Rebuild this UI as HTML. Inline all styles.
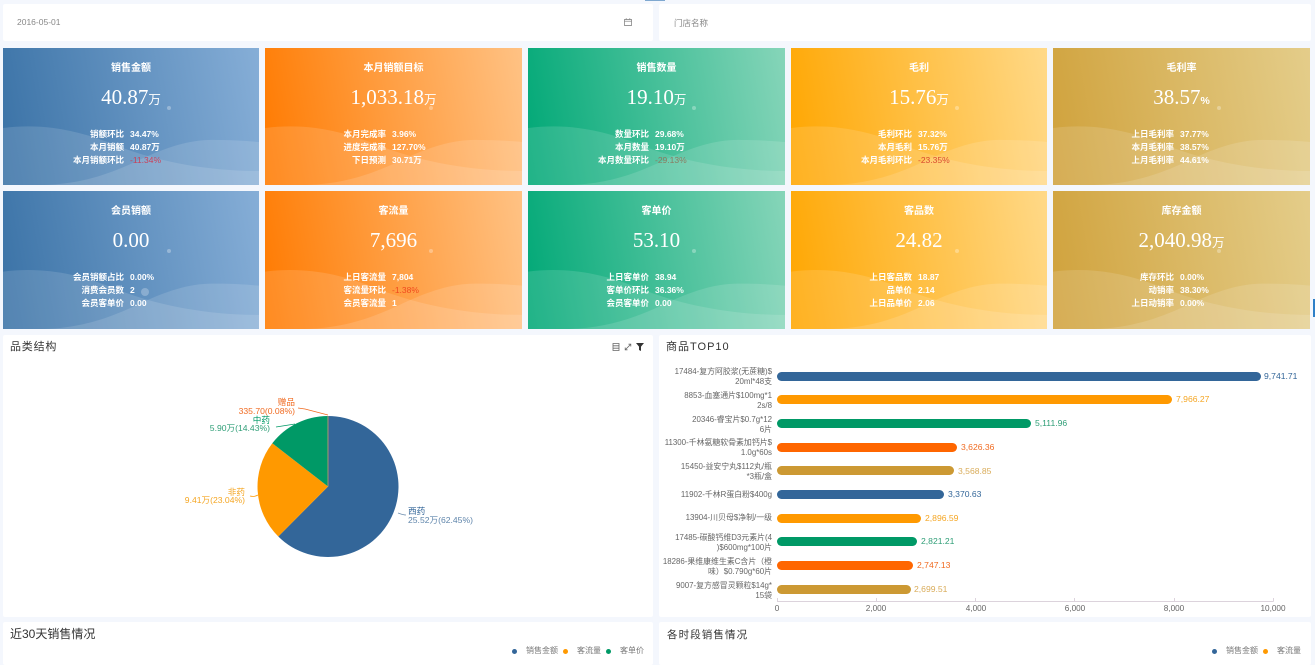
<!DOCTYPE html>
<html lang="zh"><head><meta charset="utf-8"><title>Dashboard</title>
<style>
html,body{margin:0;padding:0}
body{width:1315px;height:665px;position:relative;overflow:hidden;background:#f4f7fd;font-family:"Liberation Sans","Noto Sans CJK SC",sans-serif;color:#333}
.p{position:absolute;background:#fff;border-radius:2px}
.c{position:absolute;overflow:hidden;color:#fff}
.c svg{position:absolute;left:0;top:0;width:100%;height:100%}
.blue{background:linear-gradient(80deg,#3a72a6 0%,#86aed7 100%)}
.orange{background:linear-gradient(80deg,#ff7a00 0%,#ffc284 100%)}
.green{background:linear-gradient(80deg,#00a876 0%,#86d5b9 100%)}
.amber{background:linear-gradient(80deg,#ffa600 0%,#ffd988 100%)}
.gold{background:linear-gradient(80deg,#d0a23c 0%,#e4cd8a 100%)}
.t{position:absolute;left:0;right:0;top:14px;line-height:14px;text-align:center;font-size:10px;font-weight:bold}
.n{position:absolute;left:0;right:0;top:34px;line-height:30px;text-align:center;font-size:21px;font-family:"Liberation Serif","Noto Sans CJK SC",serif}
.n small{font-size:12.5px;font-family:"Liberation Sans","Noto Sans CJK SC",sans-serif}
.n small.pc{font-size:10.5px;font-weight:bold}
.l,.v{position:absolute;font-size:8.5px;line-height:13px;white-space:nowrap;font-weight:bold}
.l{left:0;width:121px;text-align:right}
.v{left:127px}
.a{top:80px}.b{top:93px}.d{top:106px}
.v.red{color:#d9482f;font-weight:normal}
.o{position:absolute;left:164px;top:58px;width:4px;height:4px;border-radius:50%;background:rgba(255,255,255,.3)}
.h{position:absolute;font-size:11px;line-height:14px;color:#333;white-space:nowrap}
.x{position:absolute;font-size:8px;line-height:10px;color:#777;white-space:nowrap}
.e{position:absolute;width:5px;height:5px;border-radius:50%}
.cat{position:absolute;left:640px;width:132px;text-align:right;font-size:7.9px;line-height:9.5px;color:#666;white-space:nowrap}
.bar{position:absolute;left:777px;height:9px;border-radius:4.5px}
.val{position:absolute;font-size:8.6px;line-height:10px;white-space:nowrap}
.tk{position:absolute;top:604px;width:40px;text-align:center;font-size:8.2px;line-height:10px;color:#666}
</style></head><body>
<svg width="0" height="0" style="position:absolute"><defs><symbol id="w" viewBox="0 0 256 137" preserveAspectRatio="none">
<path d="M0 80C40 75 75 82 112 97C150 112 200 123 256 123V137H0Z" fill="#fff" fill-opacity=".13"/>
<path d="M41 137C75 136 102 128 132 114C165 98 190 91 213 92C230 92 245 93 256 94V137Z" fill="#fff" fill-opacity=".13"/>
</symbol></defs></svg>

<div style="position:absolute;left:645px;top:0;width:20px;height:1px;background:#7fa8d0"></div>
<div style="position:absolute;left:1313px;top:299px;width:2px;height:18px;background:#2f80c8"></div>

<div class="p" style="left:3px;top:4px;width:650px;height:37px"></div>
<div class="p" style="left:659px;top:4px;width:652px;height:37px"></div>
<div class="x" style="left:17px;top:17px;color:#888;font-size:8.5px">2016-05-01</div>
<svg style="position:absolute;left:624px;top:18px" width="8" height="8" viewBox="0 0 8 8"><path d="M.5 1.5h7v6h-7zM.5 3.2h7M2.2.3v1.6M5.8.3v1.6" fill="none" stroke="#777" stroke-width=".7"/></svg>
<div class="x" style="left:674px;top:18px;color:#888;font-size:8.5px">门店名称</div>

<!-- row 1 -->
<div class="c blue" style="left:3px;top:48px;width:256px;height:137px"><svg><use href="#w"/></svg><div class="t">销售金额</div><div class="n">40.87<small>万</small></div><div class="o"></div>
<div class="l a">销额环比</div><div class="v a">34.47%</div><div class="l b">本月销额</div><div class="v b">40.87万</div><div class="l d">本月销额环比</div><div class="v d red" style="color:#c9405a">-11.34%</div></div>
<div class="c orange" style="left:265px;top:48px;width:257px;height:137px"><svg><use href="#w"/></svg><div class="t">本月销额目标</div><div class="n">1,033.18<small>万</small></div><div class="o"></div>
<div class="l a">本月完成率</div><div class="v a">3.96%</div><div class="l b">进度完成率</div><div class="v b">127.70%</div><div class="l d">下日预测</div><div class="v d">30.71万</div></div>
<div class="c green" style="left:528px;top:48px;width:257px;height:137px"><svg><use href="#w"/></svg><div class="t">销售数量</div><div class="n">19.10<small>万</small></div><div class="o"></div>
<div class="l a">数量环比</div><div class="v a">29.68%</div><div class="l b">本月数量</div><div class="v b">19.10万</div><div class="l d">本月数量环比</div><div class="v d red" style="color:#8a7a60">-29.13%</div></div>
<div class="c amber" style="left:791px;top:48px;width:256px;height:137px"><svg><use href="#w"/></svg><div class="t">毛利</div><div class="n">15.76<small>万</small></div><div class="o"></div>
<div class="l a">毛利环比</div><div class="v a">37.32%</div><div class="l b">本月毛利</div><div class="v b">15.76万</div><div class="l d">本月毛利环比</div><div class="v d red">-23.35%</div></div>
<div class="c gold" style="left:1053px;top:48px;width:257px;height:137px"><svg><use href="#w"/></svg><div class="t">毛利率</div><div class="n">38.57<small class="pc">%</small></div><div class="o"></div>
<div class="l a">上日毛利率</div><div class="v a">37.77%</div><div class="l b">本月毛利率</div><div class="v b">38.57%</div><div class="l d">上月毛利率</div><div class="v d">44.61%</div></div>

<!-- row 2 -->
<div class="c blue" style="left:3px;top:191px;width:256px;height:138px"><svg><use href="#w"/></svg><div class="t">会员销额</div><div class="n">0.00</div><div class="o"></div>
<div style="position:absolute;left:138px;top:97px;width:8px;height:8px;border-radius:50%;background:rgba(255,255,255,.25)"></div>
<div class="l a">会员销额占比</div><div class="v a">0.00%</div><div class="l b">消费会员数</div><div class="v b">2</div><div class="l d">会员客单价</div><div class="v d">0.00</div></div>
<div class="c orange" style="left:265px;top:191px;width:257px;height:138px"><svg><use href="#w"/></svg><div class="t">客流量</div><div class="n">7,696</div><div class="o"></div>
<div class="l a">上日客流量</div><div class="v a">7,804</div><div class="l b">客流量环比</div><div class="v b red" style="color:#f0491e">-1.38%</div><div class="l d">会员客流量</div><div class="v d">1</div></div>
<div class="c green" style="left:528px;top:191px;width:257px;height:138px"><svg><use href="#w"/></svg><div class="t">客单价</div><div class="n">53.10</div><div class="o"></div>
<div class="l a">上日客单价</div><div class="v a">38.94</div><div class="l b">客单价环比</div><div class="v b">36.36%</div><div class="l d">会员客单价</div><div class="v d">0.00</div></div>
<div class="c amber" style="left:791px;top:191px;width:256px;height:138px"><svg><use href="#w"/></svg><div class="t">客品数</div><div class="n">24.82</div><div class="o"></div>
<div class="l a">上日客品数</div><div class="v a">18.87</div><div class="l b">品单价</div><div class="v b">2.14</div><div class="l d">上日品单价</div><div class="v d">2.06</div></div>
<div class="c gold" style="left:1053px;top:191px;width:257px;height:138px"><svg><use href="#w"/></svg><div class="t">库存金额</div><div class="n">2,040.98<small>万</small></div><div class="o"></div>
<div class="l a">库存环比</div><div class="v a">0.00%</div><div class="l b">动销率</div><div class="v b">38.30%</div><div class="l d">上日动销率</div><div class="v d">0.00%</div></div>

<!-- chart panels -->
<div class="p" style="left:3px;top:335px;width:650px;height:282px"></div>
<div class="p" style="left:659px;top:335px;width:652px;height:282px"></div>
<div class="p" style="left:3px;top:622px;width:650px;height:43px"></div>
<div class="p" style="left:659px;top:622px;width:652px;height:43px"></div>

<div class="h" style="left:10px;top:340px;letter-spacing:.8px">品类结构</div>
<svg style="position:absolute;left:611px;top:342px" width="34" height="10" viewBox="0 0 34 10">
<path d="M2 1.5h6v7h-6zM2 3.8h6M2 6.2h6" fill="none" stroke="#666" stroke-width=".8"/>
<path d="M14.5 7.5l5-5M17.5 2.2h2.3v2.3M14.2 5.5v2.3h2.3" fill="none" stroke="#666" stroke-width=".8"/>
<path d="M25 1h8l-3 3.6V9l-2-1V4.6z" fill="#333"/>
</svg>

<svg style="position:absolute;left:0;top:380px" width="653" height="200" viewBox="0 380 653 200">
<path d="M328 486.5L327.6 416A70.5 70.5 0 1 1 278.3 536.5Z" fill="#336699"/>
<path d="M328 486.5L278.3 536.5A70.5 70.5 0 0 1 272.3 443.3Z" fill="#ff9900"/>
<path d="M328 486.5L272.3 443.3A70.5 70.5 0 0 1 327.6 416Z" fill="#009966"/>
<path d="M328 486.5V416" stroke="#cc9966" stroke-width=".8"/>
<g fill="none" stroke-width=".8">
<path d="M398 513C401 514 403 515 406 515" stroke="#6f8fb0"/>
<path d="M258 495C256 496 254 497 250 496" stroke="#ff9900"/>
<path d="M295 424L276 427" stroke="#009966"/>
<path d="M328 415L305 409L298 408" stroke="#f06a20"/>
</g>
<g font-size="8.6" font-family="Liberation Sans,Noto Sans CJK SC,sans-serif">
<text x="408" y="514" fill="#336699">西药</text>
<text x="408" y="523" fill="#5f85ab">25.52万(62.45%)</text>
<text x="245" y="495" text-anchor="end" fill="#f5a623">非药</text>
<text x="245" y="503" text-anchor="end" fill="#f5a623">9.41万(23.04%)</text>
<text x="270" y="423" text-anchor="end" fill="#009966">中药</text>
<text x="270" y="431" text-anchor="end" fill="#2f9e77">5.90万(14.43%)</text>
<text x="295" y="405" text-anchor="end" fill="#f06a20">赠品</text>
<text x="295" y="414" text-anchor="end" fill="#f06a20">335.70(0.08%)</text>
</g>
</svg>

<div class="h" style="left:666px;top:340px;letter-spacing:1px">商品TOP10</div>

<div class="cat" style="top:367px">17484-复方阿胶浆(无蔗糖)$<br>20ml*48支</div>
<div class="cat" style="top:391px">8853-血塞通片$100mg*1<br>2s/8</div>
<div class="cat" style="top:415px">20346-睿宝片$0.7g*12<br>6片</div>
<div class="cat" style="top:438px">11300-千林氨糖软骨素加钙片$<br>1.0g*60s</div>
<div class="cat" style="top:462px">15450-益安宁丸$112丸/瓶<br>*3瓶/盒</div>
<div class="cat" style="top:490px">11902-千林R蛋白粉$400g</div>
<div class="cat" style="top:513px">13904-川贝母$净制/一级</div>
<div class="cat" style="top:533px">17485-碳酸钙维D3元素片(4<br>)$600mg*100片</div>
<div class="cat" style="top:557px">18286-果维康维生素C含片（橙<br>味）$0.790g*60片</div>
<div class="cat" style="top:581px">9007-复方感冒灵颗粒$14g*<br>15袋</div>

<div class="bar" style="top:372px;width:484px;background:#336699"></div><div class="val" style="left:1264px;top:371px;color:#336699">9,741.71</div>
<div class="bar" style="top:395px;width:395px;background:#ff9900"></div><div class="val" style="left:1176px;top:394px;color:#f5a623">7,966.27</div>
<div class="bar" style="top:419px;width:254px;background:#009966"></div><div class="val" style="left:1035px;top:418px;color:#2f9e77">5,111.96</div>
<div class="bar" style="top:443px;width:180px;background:#ff6600"></div><div class="val" style="left:961px;top:442px;color:#f06a20">3,626.36</div>
<div class="bar" style="top:466px;width:177px;background:#cc9933"></div><div class="val" style="left:958px;top:466px;color:#d9ac5a">3,568.85</div>
<div class="bar" style="top:490px;width:167px;background:#336699"></div><div class="val" style="left:948px;top:489px;color:#336699">3,370.63</div>
<div class="bar" style="top:514px;width:144px;background:#ff9900"></div><div class="val" style="left:925px;top:513px;color:#f5a623">2,896.59</div>
<div class="bar" style="top:537px;width:140px;background:#009966"></div><div class="val" style="left:921px;top:536px;color:#2f9e77">2,821.21</div>
<div class="bar" style="top:561px;width:136px;background:#ff6600"></div><div class="val" style="left:917px;top:560px;color:#f06a20">2,747.13</div>
<div class="bar" style="top:585px;width:134px;background:#cc9933"></div><div class="val" style="left:914px;top:584px;color:#d9ac5a">2,699.51</div>

<svg style="position:absolute;left:770px;top:595px" width="510" height="8" viewBox="770 595 510 8"><path d="M777 601.5H1273.5M777.5 598v3.5M876.5 598v3.5M975.5 598v3.5M1074.5 598v3.5M1174.5 598v3.5M1273.5 598v3.5" fill="none" stroke="#dcd3dc" stroke-width="1"/></svg>
<div class="tk" style="left:757px">0</div>
<div class="tk" style="left:856px">2,000</div>
<div class="tk" style="left:956px">4,000</div>
<div class="tk" style="left:1055px">6,000</div>
<div class="tk" style="left:1154px">8,000</div>
<div class="tk" style="left:1253px">10,000</div>

<div class="h" style="left:10px;top:627px;font-size:12px">近30天销售情况</div>
<div class="e" style="left:512px;top:649px;background:#336699"></div><div class="x" style="left:526px;top:646px">销售金额</div>
<div class="e" style="left:563px;top:649px;background:#ff9900"></div><div class="x" style="left:577px;top:646px">客流量</div>
<div class="e" style="left:606px;top:649px;background:#009966"></div><div class="x" style="left:620px;top:646px">客单价</div>

<div class="h" style="left:667px;top:628px;font-size:10.5px;letter-spacing:1.1px">各时段销售情况</div>
<div class="e" style="left:1212px;top:649px;background:#336699"></div><div class="x" style="left:1226px;top:646px">销售金额</div>
<div class="e" style="left:1263px;top:649px;background:#ff9900"></div><div class="x" style="left:1277px;top:646px">客流量</div>
</body></html>
